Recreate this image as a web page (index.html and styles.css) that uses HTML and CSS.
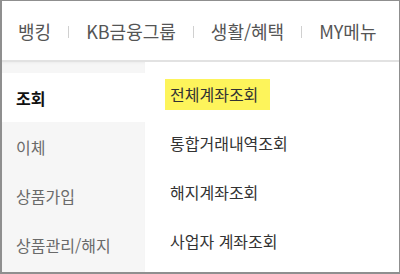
FILE: index.html
```html
<!DOCTYPE html>
<html lang="ko">
<head>
<meta charset="utf-8">
<link rel="stylesheet" href="styles.css">
</head>
<body>
<div class="frame">
  <nav class="gnb">
    <span class="gnb-item">뱅킹</span>
    <span class="sep"></span>
    <span class="gnb-item">KB금융그룹</span>
    <span class="sep"></span>
    <span class="gnb-item">생활/혜택</span>
    <span class="sep"></span>
    <span class="gnb-item">MY메뉴</span>
  </nav>
  <div class="body">
    <ul class="side">
      <li class="side-item active">조회</li>
      <li class="side-item">이체</li>
      <li class="side-item">상품가입</li>
      <li class="side-item">상품관리/해지</li>
    </ul>
    <ul class="sub">
      <li class="sub-item"><span class="label hl">전체계좌조회</span></li>
      <li class="sub-item"><span class="label">통합거래내역조회</span></li>
      <li class="sub-item"><span class="label">해지계좌조회</span></li>
      <li class="sub-item"><span class="label">사업자 계좌조회</span></li>
    </ul>
  </div>
</div>
</body>
</html>
```

FILE: styles.css
```css
* { box-sizing: border-box; }
html, body { margin: 0; padding: 0; background: #fff; }
body { font-family: "Noto Sans CJK KR", "Noto Sans", sans-serif; }
.frame {
  width: 400px;
  height: 274px;
  border: 1px solid #8f8f8f;
  border-left-width: 2px;
  border-bottom-width: 2px;
  display: flex;
  flex-direction: column;
  overflow: hidden;
}
.gnb {
  height: 61px;
  flex: none;
  display: flex;
  align-items: center;
  gap: 17px;
  padding: 0 0 0 16px;
  border-bottom: 2px solid #e2e2e2;
  font-size: 18px;
  color: #555;
}
.gnb-item { line-height: 20px; }
.sep { width: 1px; height: 12px; background: #d0d0d0; margin-top: 2px; }
.body { flex: 1; display: flex; min-height: 0; }
ul { list-style: none; margin: 0; padding: 0; }
.side {
  width: 143px;
  flex: none;
  background: #f6f6f6;
  padding-top: 11px;
  box-shadow: inset 0 2px 2px -1px #ececec;
}
.side-item {
  height: 49px;
  display: flex;
  align-items: center;
  padding-left: 14px;
  font-size: 16px;
  color: #6a6a6a;
}
.side-item.active { background: #fff; color: #111; font-weight: bold; }
.sub { flex: 1; padding: 8px 0 0 20px; }
.sub-item {
  height: 49px;
  display: flex;
  align-items: center;
  font-size: 16px;
  color: #333;
}
.label { padding: 0 6px 0 5px; line-height: 31px; }
.label.hl { background: #fdf45b; padding-right: 12px; }
```
